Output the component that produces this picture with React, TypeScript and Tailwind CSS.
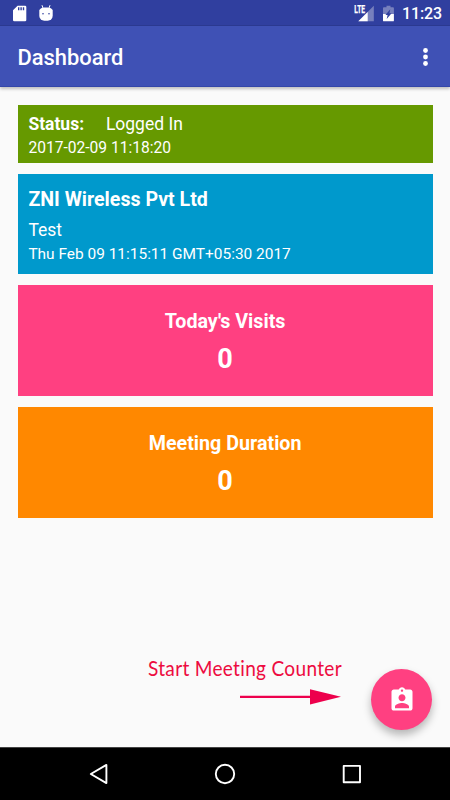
import React from "react";

function StatusBar() {
  return (
    <div className="flex h-[26px] items-center bg-[#303f9f] shadow-[inset_0_-1px_0_#2c3a92]">
      <svg className="ml-[13px] shrink-0" width="14" height="17" viewBox="0 0 14 17">
        <path fill="#fff" d="M4.6.7H12a1.3 1.3 0 0 1 1.3 1.3v13A1.3 1.3 0 0 1 12 16.300H1.300A1.300 1.300 0 0 1 0 15V5.300z" />
        <path fill="#303f9f" d="M5 2.300h1.400v3H5zM7.400 2.300h1.400v3H7.400zM9.800 2.300h1.400v3H9.800z" />
      </svg>
      <svg className="ml-[12px] shrink-0" width="14" height="17" viewBox="0 0 14 17">
        <path d="M3 .2 4.300 4M11 .2 9.700 4" stroke="#fff" strokeWidth="1" />
        <path fill="#fff" d="M.3 5Q1.500 2.500 5 2.500H9Q12.500 2.500 13.700 5V10.800A5 5 0 0 1 8.700 15.800H5.300A5 5 0 0 1 .3 10.800z" />
        <circle cx="4" cy="8.800" r=".8" fill="#303f9f" />
        <circle cx="10" cy="8.800" r=".8" fill="#303f9f" />
      </svg>
      <svg className="ml-auto shrink-0" width="21" height="17" viewBox="0 0 21 17">
        <path fill="#7780bd" d="M19.800.8V16.300H4.300z" />
        <path fill="#303f9f" d="M0 0h11.500v8.500H0z" />
        <path fill="#fff" d="M13.700 7V16.300H4.300z" />
        <text x="0.300" y="8" fontFamily="Roboto, sans-serif" fontSize="10" fontWeight="700" fill="#fff" stroke="#fff" strokeWidth="0.250" textLength="10.800" lengthAdjust="spacingAndGlyphs">LTE</text>
      </svg>
      <svg className="ml-[8px] shrink-0" width="11" height="17" viewBox="0 0 11 17">
        <path fill="#7780bd" d="M3.500.7h4v1.600H10A.9.9 0 0 1 10.900 3.200V9H0V3.200A.9.9 0 0 1 .9 2.300h2.600z" />
        <path fill="#fff" d="M0 9h10.900v6.400a.9.9 0 0 1-.9.9H.9a.9.9 0 0 1-.9-.9z" />
        <path fill="#303f9f" d="M7.300 4.300 6.400 8.300h2.200l-4.900 5.800.9-4.100H2.400z" />
      </svg>
      <span className="ml-[8px] mr-[9px] mt-[2px] w-[39px] whitespace-nowrap text-[16px] font-medium leading-5 tracking-[-0.150px] text-white">11:23</span>
    </div>
  );
}

function AppBar() {
  return (
    <header className="flex h-[61px] items-center justify-between border-b border-[#3447a9] bg-[#3f51b5] pl-[17.500px] pr-[22px] shadow-[0_2px_3px_rgba(0,0,0,0.240)]">
      <h1 className="mt-[3px] text-[21.900px] font-medium leading-7 text-white">Dashboard</h1>
      <svg className="mt-[2px]" width="5" height="20" viewBox="0 0 5 20" fill="#fff">
        <circle cx="2.500" cy="3.500" r="2.400" />
        <circle cx="2.500" cy="10" r="2.400" />
        <circle cx="2.500" cy="16.500" r="2.400" />
      </svg>
    </header>
  );
}

function Metric({ title, color, className }: { title: string; color: string; className: string }) {
  return (
    <section className={`flex flex-col items-center text-white ${color} ${className}`}>
      <h2 className="text-[19.700px] font-bold leading-6">{title}</h2>
      <p className="mt-[9px] text-[27px] font-bold leading-8">0</p>
    </section>
  );
}

export default function App() {
  return (
    <div className="flex h-[800px] w-[450px] flex-col overflow-hidden bg-[#fafafa] font-['Roboto',sans-serif]">
      <StatusBar />
      <AppBar />
      <main className="flex flex-1 flex-col pl-[17.600px] pr-[17.400px] pt-[18px]">
        <section className="h-[58px] bg-[#669900] pl-[10.800px] pt-[7px] text-white">
          <div className="flex text-[17.500px] leading-6">
            <span className="w-[77.500px] font-bold">Status:</span>
            <span>Logged In</span>
          </div>
          <p className="mt-px text-[15.600px] leading-[22px]">2017-02-09 11:18:20</p>
        </section>
        <section className="mt-[11px] h-[100px] bg-[#0099cc] pl-[10.800px] pt-[14px] text-white">
          <h2 className="text-[19.600px] font-bold leading-6">ZNI Wireless Pvt Ltd</h2>
          <p className="mt-[6px] text-[17.500px] leading-6">Test</p>
          <p className="mt-px text-[15.450px] leading-[22px]">Thu Feb 09 11:15:11 GMT+05:30 2017</p>
        </section>
        <Metric title="Today's Visits" color="bg-[#ff4081]" className="mt-[11.400px] h-[110.600px] pt-[24.600px]" />
        <Metric title="Meeting Duration" color="bg-[#ff8800]" className="mt-[11px] h-[111px] pt-[25px]" />
        <div className="mt-auto flex h-[98px] justify-end pr-[0.600px]">
          <div className="mr-[30px] mt-[7px] w-[193px]">
            <p className="origin-left scale-x-[0.930] whitespace-nowrap font-['Lato',sans-serif] text-[20.500px] leading-6 tracking-[0.330px] text-[#ed0b40] [font-variant-ligatures:none]">Start Meeting Counter</p>
            <svg className="ml-[92px] mt-[9px]" width="102" height="16" viewBox="0 0 102 16" fill="#ed004c">
              <path d="M0 6.700h70V.2l31 7.600-31 7.700V9H0z" />
            </svg>
          </div>
          <button aria-label="Start meeting" className="mt-[20px] flex size-[61px] shrink-0 items-center justify-center rounded-full bg-[#ff4081] shadow-[0_5px_8px_rgba(0,0,0,0.280)]">
            <svg width="28" height="28" viewBox="0 0 24 24" fill="#fff">
              <path d="M19 3h-4.180C14.400 1.840 13.300 1 12 1c-1.300 0-2.400.84-2.820 2H5c-1.100 0-2 .9-2 2v14c0 1.100.9 2 2 2h14c1.100 0 2-.9 2-2V5c0-1.100-.9-2-2-2zm-7 0c.55 0 1 .45 1 1s-.45 1-1 1-1-.45-1-1 .45-1 1-1zm0 4c1.660 0 3 1.340 3 3s-1.340 3-3 3-3-1.340-3-3 1.340-3 3-3zm6 12H6v-1.400c0-2 4-3.100 6-3.100s6 1.100 6 3.100V19z" />
            </svg>
          </button>
        </div>
      </main>
      <nav className="flex h-[53px] items-center justify-between bg-black px-[88px] shadow-[inset_0_1px_0_#444]">
        <svg width="22" height="22" viewBox="0 0 22 22" fill="none" stroke="#fff" strokeWidth="1.900" strokeLinejoin="round">
          <path d="M18.400 1.900V20.100L2.800 11z" />
        </svg>
        <svg width="22" height="22" viewBox="0 0 22 22" fill="none" stroke="#fff" strokeWidth="1.900">
          <circle cx="11" cy="11" r="9.200" />
        </svg>
        <svg width="22" height="22" viewBox="0 0 22 22" fill="none" stroke="#fff" strokeWidth="1.900" strokeLinejoin="round">
          <path d="M3.700 2.900h16.300v16.300H3.700z" />
        </svg>
      </nav>
    </div>
  );
}
